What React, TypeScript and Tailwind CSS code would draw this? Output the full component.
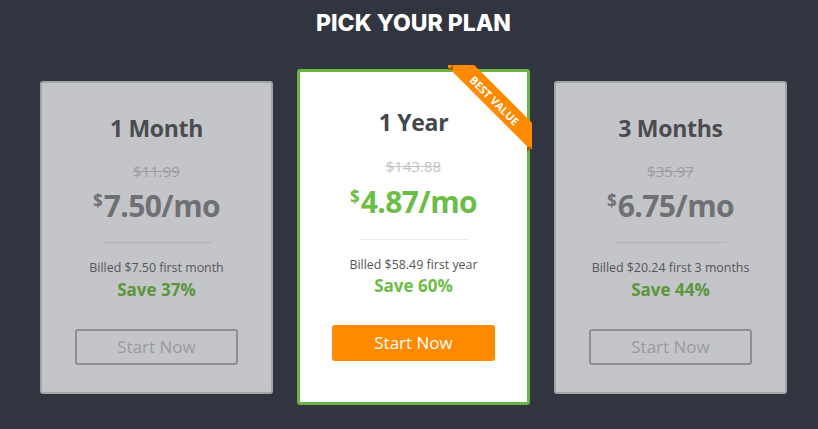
import React from 'react';

type Plan = {
  name: string;
  was: string;
  price: string;
  billed: string;
  save: string;
};

const plans: Record<string, Plan> = {
  month: { name: '1 Month', was: '$11.99', price: '7.50/mo', billed: 'Billed $7.50 first month', save: 'Save 37%' },
  year: { name: '1 Year', was: '$143.88', price: '4.87/mo', billed: 'Billed $58.49 first year', save: 'Save 60%' },
  quarter: { name: '3 Months', was: '$35.97', price: '6.75/mo', billed: 'Billed $20.24 first 3 months', save: 'Save 44%' },
};

function SideCard({ plan }: { plan: Plan }) {
  return (
    <div className="w-[233px] h-[313px] shrink-0 rounded-[3px] border-2 border-[#a3a4a8] bg-[#c4c5c9] flex flex-col items-center pt-[29px]">
      <h2 className="text-[23px] leading-[32px] tracking-[-0.3px] font-bold text-[#4b4c50]">{plan.name}</h2>
      <p className="mt-[17px] text-[15px] leading-[20px] text-[#9c9da1] line-through">{plan.was}</p>
      <div className="mt-[7px] flex items-start text-[#6f7074] font-bold">
        <span className="mt-[4px] text-[17px] leading-[17px]">$</span>
        <span className="ml-[1px] text-[30px] leading-[36px] tracking-[-0.6px]">{plan.price}</span>
      </div>
      <div className="mt-[18px] w-[110px] h-px bg-[#b3b4b8]" />
      <p className="mt-[16px] text-[12.4px] leading-[18px] text-[#55565a]">{plan.billed}</p>
      <p className="mt-[2px] text-[17px] leading-[22px] font-bold text-[#5b963d]">{plan.save}</p>
      <button className="mt-[28px] w-[163px] h-[36px] rounded-[3px] border-2 border-[#8f9094] text-[17px] text-[#9a9b9f]">
        Start Now
      </button>
    </div>
  );
}

function FeaturedCard({ plan }: { plan: Plan }) {
  return (
    <div className="relative w-[233px] h-[336px] shrink-0 rounded-[3px] border-[3px] border-[#6ab446] bg-white flex flex-col items-center pt-[34px]">
      {/* ribbon */}
      <div className="absolute top-[-7px] right-[-5px] w-[84px] h-[84px] overflow-hidden">
        <div className="absolute left-[-23px] top-[25px] w-[140px] h-[20px] rotate-45 bg-[#ff8a00] flex items-center justify-center">
          <span className="text-[11px] leading-none font-bold text-white">BEST VALUE</span>
        </div>
      </div>
      <div className="absolute top-[-7px] left-[148px] w-[5px] h-[5px] bg-[#a85a00] [clip-path:polygon(100%_100%,0_100%,100%_0)]" />
      <div className="absolute top-[75px] right-[-5px] w-[5px] h-[5px] bg-[#a85a00] [clip-path:polygon(0_0,100%_0,0_100%)]" />
      <h2 className="text-[23px] leading-[32px] tracking-[-0.3px] font-bold text-[#44474c]">{plan.name}</h2>
      <p className="mt-[18px] text-[15px] leading-[20px] text-[#c4c4c4] line-through">{plan.was}</p>
      <div className="mt-[8px] flex items-start text-[#6cbd47] font-bold">
        <span className="mt-[4px] text-[17px] leading-[17px]">$</span>
        <span className="ml-[1px] text-[30px] leading-[36px] tracking-[-0.6px]">{plan.price}</span>
      </div>
      <div className="mt-[19px] w-[110px] h-px bg-[#ececec]" />
      <p className="mt-[16px] text-[12.4px] leading-[18px] text-[#555555]">{plan.billed}</p>
      <p className="mt-[1px] text-[17px] leading-[22px] font-bold text-[#6cbd47]">{plan.save}</p>
      <button className="mt-[28px] w-[163px] h-[36px] rounded-[3px] bg-[#ff8a00] text-[17px] text-white">
        Start Now
      </button>
    </div>
  );
}

export default function App() {
  return (
    <div className="w-[818px] h-[429px] overflow-hidden bg-[#30353f] font-['Open_Sans',sans-serif]">
      <div className="w-[787px] pl-[40px] pt-[9px]">
        <h1 className="text-center font-['Inter',sans-serif] text-[23px] leading-[28px] font-extrabold text-white">
          PICK YOUR PLAN
        </h1>
        <div className="mt-[32px] flex items-center gap-6">
          <SideCard plan={plans.month} />
          <FeaturedCard plan={plans.year} />
          <SideCard plan={plans.quarter} />
        </div>
      </div>
    </div>
  );
}
